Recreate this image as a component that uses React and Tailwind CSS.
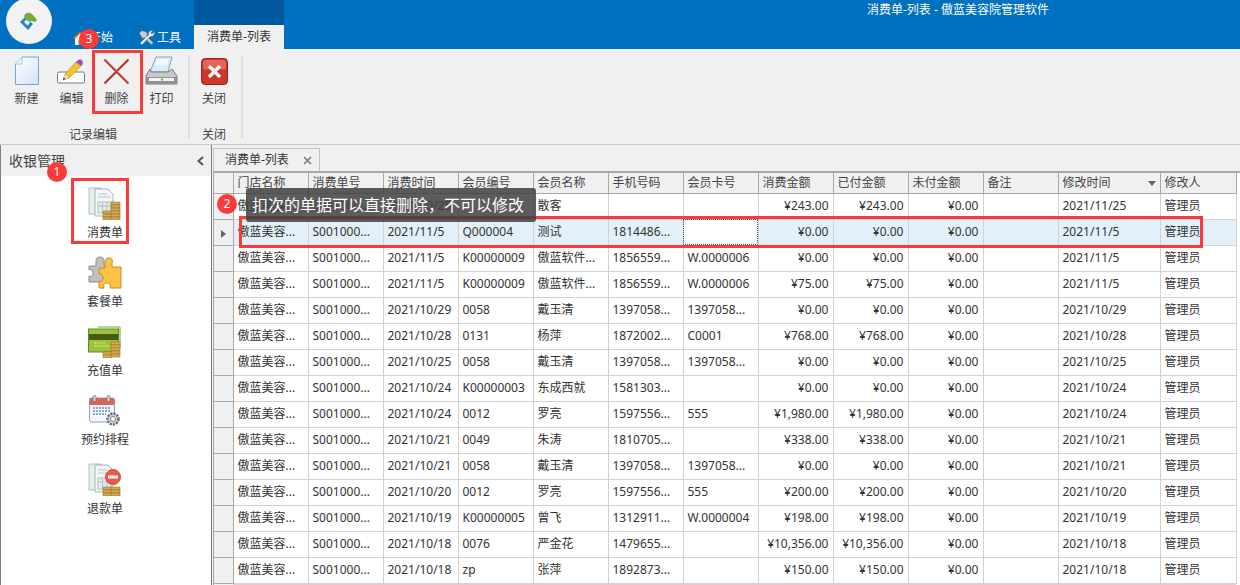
import React from "react";

const font = { fontFamily: '"Noto Sans", "Noto Sans CJK SC", sans-serif' };

const columns = [
  ["门店名称", "w-[75px]"],
  ["消费单号", "w-[75px]"],
  ["消费时间", "w-[75px]"],
  ["会员编号", "w-[75px]"],
  ["会员名称", "w-[75px]"],
  ["手机号码", "w-[75px]"],
  ["会员卡号", "w-[75px]"],
  ["消费金额", "w-[75px]"],
  ["已付金额", "w-[75px]"],
  ["未付金额", "w-[75px]"],
  ["备注", "w-[75px]"],
  ["修改时间", "w-[102px]"],
  ["修改人", "w-[76px]"],
];

const rows = [
  ["2021/10/25", "", "散客", "", "", "¥243.00", "¥243.00", "2021/11/25"],
  ["2021/11/5", "Q000004", "测试", "1814486...", "", "¥0.00", "¥0.00", "2021/11/5"],
  ["2021/11/5", "K00000009", "傲蓝软件...", "1856559...", "W.0000006", "¥0.00", "¥0.00", "2021/11/5"],
  ["2021/11/5", "K00000009", "傲蓝软件...", "1856559...", "W.0000006", "¥75.00", "¥75.00", "2021/11/5"],
  ["2021/10/29", "0058", "戴玉清", "1397058...", "1397058...", "¥0.00", "¥0.00", "2021/10/29"],
  ["2021/10/28", "0131", "杨萍", "1872002...", "C0001", "¥768.00", "¥768.00", "2021/10/28"],
  ["2021/10/25", "0058", "戴玉清", "1397058...", "1397058...", "¥0.00", "¥0.00", "2021/10/25"],
  ["2021/10/24", "K00000003", "东成西就", "1581303...", "", "¥0.00", "¥0.00", "2021/10/24"],
  ["2021/10/24", "0012", "罗亮", "1597556...", "555", "¥1,980.00", "¥1,980.00", "2021/10/24"],
  ["2021/10/21", "0049", "朱涛", "1810705...", "", "¥338.00", "¥338.00", "2021/10/21"],
  ["2021/10/21", "0058", "戴玉清", "1397058...", "1397058...", "¥0.00", "¥0.00", "2021/10/21"],
  ["2021/10/20", "0012", "罗亮", "1597556...", "555", "¥200.00", "¥200.00", "2021/10/20"],
  ["2021/10/19", "K00000005", "曾飞", "1312911...", "W.0000004", "¥198.00", "¥198.00", "2021/10/19"],
  ["2021/10/18", "0076", "严金花", "1479655...", "", "¥10,356.00", "¥10,356.00", "2021/10/18"],
  ["2021/10/18", "zp", "张萍", "1892873...", "", "¥150.00", "¥150.00", "2021/10/18"],
];

const LogoIcon = () => (
  <svg width="20" height="19" viewBox="0 0 20 19">
    <path d="M1 10l5-5 8 7-5 6z" fill="#2f7fc4" />
    <path d="M5 10l2.500-2.500 3.500 3-2.500 3z" fill="#f3f7fb" />
    <path d="M5 4c1-3 4-4 6-3 2 .5 4 3 7 7l-2 2-3-1C9 9 6 7 5 4z" fill="#6fae3a" />
  </svg>
);

const HomeIcon = () => (
  <svg width="16" height="16" viewBox="0 0 16 16">
    <path d="M3 8v7h10V8L8 3z" fill="#f6efe2" />
    <path d="M1 8l7-7 7 7-1.500 1L8 3.500 2.500 9z" fill="#c8602c" />
    <path d="M6.500 10h3v5h-3z" fill="#b97a3a" />
  </svg>
);

const ToolsIcon = () => (
  <svg width="18" height="16" viewBox="0 0 18 16">
    <path d="M1 3l3-2.500 3 1 3 2-1.500 2 7 7.500-2 2L6 7.500 4.500 9 3 6z" fill="#c7ced6" stroke="#4d5660" strokeWidth=".6" />
    <path d="M16.500 1.500l-2.500 2.500-1.200-1L15 .8C12.500 0 10 2 10.800 4.500L2 13l1.800 2 8.500-8.600C15 7.200 17 4.500 16.500 1.500z" fill="#eef1f4" stroke="#5c6670" strokeWidth=".6" />
  </svg>
);

const NewIcon = () => (
  <svg width="26" height="30" viewBox="0 0 26 30">
    <defs>
      <linearGradient id="ng" x1="0" y1="0" x2="1" y2="1">
        <stop offset="0" stopColor="#ffffff" />
        <stop offset="1" stopColor="#cfe3f7" />
      </linearGradient>
    </defs>
    <path d="M8 1h16.500v27.500H1.500V8z" fill="url(#ng)" stroke="#7fa4cc" />
    <path d="M8 1v7H1.500" fill="#eef5fc" stroke="#a9c3de" />
  </svg>
);

const EditIcon = () => (
  <svg width="29" height="25" viewBox="0 0 29 25">
    <rect x=".5" y="13" width="27" height="11" rx="1.500" fill="#fff" stroke="#6d7b88" />
    <path d="M19 3l5 4-12 12-6 2 2-6z" fill="#f5c32e" stroke="#a87c16" strokeWidth=".6" />
    <path d="M6 21l2-6 4 4z" fill="#f1dcb4" />
    <path d="M6 21l.800-2.500 1.800 1.500z" fill="#333" />
    <path d="M19 3l2-2c1.500-1 4-.500 4.500 1 .5 1.500.3 3-.5 4L24 7z" fill="#a14bc0" />
  </svg>
);

const DeleteIcon = () => (
  <svg width="27" height="27" viewBox="0 0 27 27">
    <path d="M1.500 1.500L25.500 25.500M25.500 1.500L1.500 25.500" stroke="#b8332e" strokeWidth="2.200" />
    <path d="M2.500 1.500L25.500 24.500" stroke="#e98078" strokeWidth=".6" />
  </svg>
);

const PrintIcon = () => (
  <svg width="33" height="30" viewBox="0 0 33 30">
    <path d="M11 1h16l-4 15H5z" fill="#dcebfa" stroke="#7ea3c6" />
    <path d="M12.500 3h11l-2 6H10.500z" fill="#f4f9fe" />
    <path d="M5 13l-4 7v8h31v-8l-5-7-4 3H6z" fill="#c7c9cc" stroke="#7a7c80" />
    <path d="M1 21h31v7H1z" fill="#8f9194" />
    <rect x="4" y="22" width="25" height="3" fill="#f5f5f5" />
    <rect x="16" y="22.500" width="2" height="2" fill="#60b040" />
  </svg>
);

const CloseIcon = () => (
  <svg width="27" height="27" viewBox="0 0 28 28">
    <rect x=".5" y=".5" width="27" height="27" rx="4" fill="#c9382b" stroke="#8f1e14" />
    <rect x="2" y="2" width="24" height="10" rx="3" fill="#e0655a" />
    <path d="M7 9.500L9.500 7 14 11.500 18.500 7 21 9.500 16.500 14 21 18.500 18.500 21 14 16.500 9.500 21 7 18.500 11.500 14z" fill="#f8f3f1" />
  </svg>
);

const Coins = ({ x, y, n = 4 }) => (
  <g>
    {Array.from({ length: n }).map((_, i) => (
      <rect key={i} x={x} y={y + i * 3} width="9" height="3" fill="#d4ab55" stroke="#8a6a26" strokeWidth=".5" />
    ))}
  </g>
);

const Sheets = () => (
  <g>
    <path d="M1 2h12l4 4v22H1z" fill="#e6eeee" stroke="#aebfc0" />
    <path d="M7 3h13l5 5v22H7z" fill="#f1f6f6" stroke="#a5b7b8" />
    <path d="M10 8h9M10 11h12" stroke="#b9c6c7" />
    <rect x="10" y="16" width="13" height="11" fill="#e3ebeb" stroke="#b4c2c3" />
    <path d="M14.500 16v11M19 16v11M10 20h13" stroke="#b4c2c3" />
  </g>
);

const BillIcon = () => (
  <svg width="34" height="34" viewBox="0 0 34 34">
    <Sheets />
    <Coins x={15} y={25} n={3} />
    <Coins x={23} y={16} n={6} />
  </svg>
);

const PuzzleIcon = () => (
  <svg width="34" height="34" viewBox="0 0 34 34">
    <path d="M1 11h7V6c0-2 1-4 4-4s4 2 4 4v5h3v16H1v-6c2 1 4 0 4-3s-2-4-4-3z" fill="#c0c0c0" stroke="#8d8d8d" />
    <path d="M11 13h6V8c0-3 1-5 4-5s4 2 3 5v4h9v21H22c1-3 0-5-3-5s-4 2-3 5h-5v-7c2 1 4 0 4-3s-2-5-4-4z" fill="#fbc344" stroke="#c98a26" />
  </svg>
);

const CardIcon = () => (
  <svg width="34" height="32" viewBox="0 0 34 32">
    <path d="M10 1h22v21" fill="none" stroke="#7d9d3a" />
    <rect x=".5" y="3" width="30" height="23" fill="#9cc23b" stroke="#5f8a1e" />
    <rect x="1" y="8" width="29" height="6" fill="#4a5a14" />
    <path d="M6 17h12M6 20h16" stroke="#d8e88a" strokeDasharray="2 1" />
    <Coins x={15} y={26} n={2} />
    <Coins x={23} y={16} n={5} />
  </svg>
);

const CalendarIcon = () => (
  <svg width="32" height="32" viewBox="0 0 32 32">
    <rect x=".5" y="3" width="25" height="24" rx="2" fill="#f3f6fb" stroke="#8ea3c7" />
    <rect x=".5" y="3" width="25" height="7" rx="1.500" fill="#d9645a" />
    <rect x="4" y=".5" width="3" height="6" rx="1" fill="#c8ced8" stroke="#5c6470" strokeWidth=".5" />
    <rect x="18" y=".5" width="3" height="6" rx="1" fill="#c8ced8" stroke="#5c6470" strokeWidth=".5" />
    <path d="M4 13h17M4 16h17M4 19h13" stroke="#8fa7d4" strokeWidth="1.800" strokeDasharray="2 1" />
    <circle cx="24" cy="24" r="5.500" fill="#d6d8da" stroke="#6f7275" strokeWidth="2.500" strokeDasharray="2.200 1" />
    <circle cx="24" cy="24" r="2.500" fill="#fff" stroke="#7f8285" />
  </svg>
);

const RefundIcon = () => (
  <svg width="34" height="34" viewBox="0 0 34 34">
    <Sheets />
    <Coins x={15} y={25} n={3} />
    <Coins x={23} y={25} n={3} />
    <circle cx="25" cy="15" r="7.500" fill="#f0584a" stroke="#d24a3c" />
    <rect x="20" y="13.500" width="10" height="3" rx=".5" fill="#fff" />
  </svg>
);

const RibbonButton = ({ icon, label, width = "w-[45px]" }) => (
  <div className={`flex flex-col items-center ${width}`}>
    <div className="flex h-[32px] items-center justify-center">{icon}</div>
    <span className="mt-[3px] text-[12px] leading-[18px] text-[#444]">{label}</span>
  </div>
);

const SideItem = ({ icon, label }) => (
  <div className="flex h-[69px] flex-col items-center">
    <div className="flex h-[36px] items-end justify-center">{icon}</div>
    <span className="mt-[5px] text-[12px] leading-[16px] text-[#333]">{label}</span>
  </div>
);

const Badge = ({ n, className }) => (
  <div className={`absolute flex h-[20px] w-[20px] items-center justify-center rounded-full bg-[#fb3a3a] text-[12px] text-white ${className}`}>
    {n}
  </div>
);

const Cell = ({ children, right, extra = "" }) => (
  <td className={`h-[26px] overflow-hidden whitespace-nowrap border-r border-b border-[#d2d2d2] px-[4px] text-[12px] text-[#333] ${right ? "text-right" : ""} ${extra}`}>
    {children}
  </td>
);

export default function App() {
  return (
    <div className="relative h-[585px] w-[1240px] overflow-hidden bg-[#f0f0f0]" style={font}>
      {/* title bar */}
      <div className="relative flex h-[49px] bg-[#0070c0]">
        <div className="absolute left-[6px] top-[-2px] flex h-[46px] w-[46px] items-center justify-center rounded-full bg-[#f2f2f2]">
          <LogoIcon />
        </div>
        <div className="ml-[72px] flex h-full items-end pb-[2px] text-[12px] leading-[18px] text-white">
          <div className="flex w-[66px] items-center gap-[1px]">
            <HomeIcon />
            <span>开始</span>
          </div>
          <div className="flex w-[56px] items-center gap-[1px]">
            <ToolsIcon />
            <span>工具</span>
          </div>
        </div>
        <div className="flex h-full w-[90px] flex-col">
          <div className="h-[25px] bg-[#00589f]" />
          <div className="flex flex-1 items-center justify-center bg-[#f0f0f0] text-[12px] text-[#333]">消费单-列表</div>
        </div>
        <div className="flex-1 pl-[583px] pt-[1px] text-[12px] leading-[18px] text-white">消费单-列表 - 傲蓝美容院管理软件</div>
      </div>

      {/* ribbon */}
      <div className="flex h-[96px] border-b border-[#c9c9c9] bg-[#f0f0f0]">
        <div className="my-[6px] flex w-[190px] flex-col border-r-2 border-[#dcdcdc] pl-[4px]">
          <div className="flex">
            <RibbonButton icon={<NewIcon />} label="新建" />
            <RibbonButton icon={<EditIcon />} label="编辑" />
            <RibbonButton icon={<DeleteIcon />} label="删除" />
            <RibbonButton icon={<PrintIcon />} label="打印" />
          </div>
          <div className="mt-[18px] pr-[6px] text-center text-[12px] leading-[18px] text-[#444]">记录编辑</div>
        </div>
        <div className="my-[6px] flex w-[53px] flex-col border-r-2 border-[#dcdcdc] pr-[3px]">
          <RibbonButton icon={<CloseIcon />} label="关闭" width="w-full" />
          <div className="mt-[18px] text-center text-[12px] leading-[18px] text-[#444]">关闭</div>
        </div>
      </div>

      <div className="flex h-[440px]">
        {/* left panel */}
        <aside className="w-[212px] shrink-0 border-x border-[#808080] bg-white">
          <div className="flex h-[31px] items-center justify-between bg-[#f0f0f0] pl-[8px] pr-[6px] text-[14px] text-[#444]">
            <span>收银管理</span>
            <svg width="9" height="10" viewBox="0 0 9 10">
              <path d="M7 1L2.500 5 7 9" fill="none" stroke="#555" strokeWidth="2" />
            </svg>
          </div>
          <div className="pr-[2px] pt-[8px]">
            <SideItem icon={<BillIcon />} label="消费单" />
            <SideItem icon={<PuzzleIcon />} label="套餐单" />
            <SideItem icon={<CardIcon />} label="充值单" />
            <SideItem icon={<CalendarIcon />} label="预约排程" />
            <SideItem icon={<RefundIcon />} label="退款单" />
          </div>
        </aside>

        {/* document area */}
        <main className="flex-1 bg-[#f0f0f0] pl-[1px] pt-[3px]">
          <div className="flex h-[23px] w-[107px] items-center justify-between border border-b-0 border-[#c4c4c4] bg-[#f0f0f0] pl-[11px] pr-[7px] text-[12px] text-[#333]">
            <span>消费单-列表</span>
            <svg width="9" height="9" viewBox="0 0 9 9">
              <path d="M1 1l7 7M8 1L1 8" stroke="#777" strokeWidth="1.500" />
            </svg>
          </div>
          <div className="h-[414px] overflow-hidden border-t-2 border-l border-[#a9a9a9] bg-white">
            <table className="table-fixed border-collapse">
              <thead>
                <tr className="h-[20px] bg-[#f0f0f0]">
                  <th className="w-[19px] border-r border-b border-[#a9a9a9]" />
                  {columns.map(([name, w]) => (
                    <th key={name} className={`${w} relative overflow-hidden whitespace-nowrap border-r border-b border-[#a9a9a9] px-[4px] text-left text-[12px] font-normal text-[#444]`}>
                      {name}
                      {name === "修改时间" && (
                        <span className="absolute right-[4px] top-[8px] h-0 w-0 border-x-[4px] border-t-[5px] border-x-transparent border-t-[#666]" />
                      )}
                    </th>
                  ))}
                </tr>
              </thead>
              <tbody>
                {rows.map((r, i) => {
                  const selected = i === 1;
                  return (
                    <tr key={i} className={selected ? "bg-[#e3f0f9]" : "bg-white"}>
                      <td className="h-[26px] border-r border-b border-[#a9a9a9] bg-[#f0f0f0] text-center align-middle">
                        {selected && <span className="inline-block h-0 w-0 border-y-[4px] border-l-[5px] border-y-transparent border-l-[#666]" />}
                      </td>
                      <Cell>傲蓝美容...</Cell>
                      <Cell>S001000...</Cell>
                      <Cell>{r[0]}</Cell>
                      <Cell>{r[1]}</Cell>
                      <Cell>{r[2]}</Cell>
                      <Cell>{r[3]}</Cell>
                      <Cell extra={selected ? "bg-white outline-1 -outline-offset-1 outline-dotted outline-[#555]" : ""}>{r[4]}</Cell>
                      <Cell right>{r[5]}</Cell>
                      <Cell right>{r[6]}</Cell>
                      <Cell right>¥0.00</Cell>
                      <Cell />
                      <Cell>{r[7]}</Cell>
                      <Cell>管理员</Cell>
                    </tr>
                  );
                })}
                <tr className="bg-[#f9c3cc]">
                  <td className="h-[4px] bg-[#f0f0f0]" />
                  <td colSpan={13} className="h-[4px]" />
                </tr>
              </tbody>
            </table>
          </div>
        </main>
      </div>

      {/* annotations over the screenshot */}
      <div className="absolute left-[92px] top-[50px] h-[64px] w-[51px] border-[3px] border-[#fb3a3a]" />
      <div className="absolute left-[71px] top-[178px] h-[66px] w-[58px] border-[3px] border-[#fb3a3a]" />
      <div className="absolute left-[239px] top-[216px] h-[32px] w-[964px] border-[3px] border-[#fb3a3a]" />
      <div className="absolute left-[246px] top-[188px] flex h-[34px] w-[290px] items-center rounded-[3px] bg-[#404040]/85 pl-[6px] text-[16px] text-white">
        扣次的单据可以直接删除，不可以修改
      </div>
      <Badge n="1" className="left-[47px] top-[162px]" />
      <Badge n="2" className="left-[217px] top-[194px]" />
      <Badge n="3" className="left-[79px] top-[29px]" />
    </div>
  );
}
